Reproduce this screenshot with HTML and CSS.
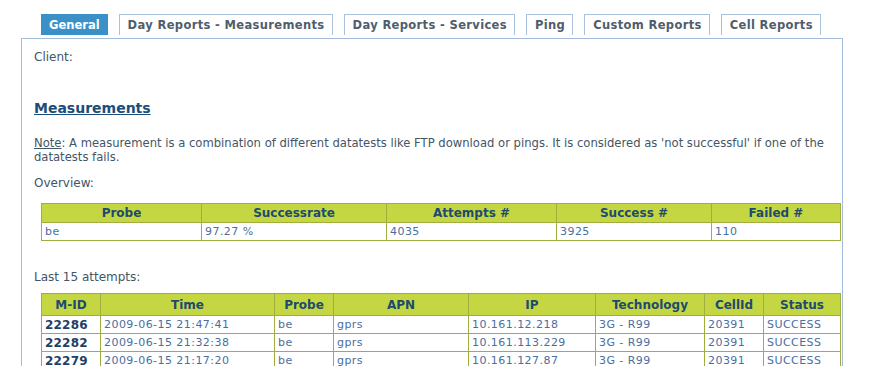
FILE: index.html
```html
<!DOCTYPE html>
<html lang="en">
<head>
    <meta charset="UTF-8">
    <title>Measurements</title>
    <link rel="stylesheet" href="styles.css">
</head>
<body>

<div class="page">
    <div class="tabs">
        <a class="tab active">General</a>
        <a class="tab">Day Reports - Measurements</a>
        <a class="tab">Day Reports - Services</a>
        <a class="tab">Ping</a>
        <a class="tab">Custom Reports</a>
        <a class="tab">Cell Reports</a>
    </div>

    <div class="panel">
        <p class="client">Client:</p>

        <h2 class="section-title">Measurements</h2>

        <p class="note"><u>Note</u>: A measurement is a combination of different datatests like FTP download or pings. It is considered as 'not successful' if one of the datatests fails.</p>

        <p class="label">Overview:</p>

        <table class="grid overview">
            <tr>
                <th>Probe</th>
                <th>Successrate</th>
                <th>Attempts #</th>
                <th>Success #</th>
                <th>Failed #</th>
            </tr>
            <tr>
                <td>be</td>
                <td>97.27 %</td>
                <td>4035</td>
                <td>3925</td>
                <td>110</td>
            </tr>
        </table>

        <p class="label last">Last 15 attempts:</p>

        <table class="grid attempts">
            <tr>
                <th>M-ID</th>
                <th>Time</th>
                <th>Probe</th>
                <th>APN</th>
                <th>IP</th>
                <th>Technology</th>
                <th>CellId</th>
                <th>Status</th>
            </tr>
            <tr>
                <td class="mid">22286</td>
                <td>2009-06-15 21:47:41</td>
                <td>be</td>
                <td>gprs</td>
                <td>10.161.12.218</td>
                <td>3G - R99</td>
                <td>20391</td>
                <td>SUCCESS</td>
            </tr>
            <tr>
                <td class="mid">22282</td>
                <td>2009-06-15 21:32:38</td>
                <td>be</td>
                <td>gprs</td>
                <td>10.161.113.229</td>
                <td>3G - R99</td>
                <td>20391</td>
                <td>SUCCESS</td>
            </tr>
            <tr>
                <td class="mid">22279</td>
                <td>2009-06-15 21:17:20</td>
                <td>be</td>
                <td>gprs</td>
                <td>10.161.127.87</td>
                <td>3G - R99</td>
                <td>20391</td>
                <td>SUCCESS</td>
            </tr>
        </table>
    </div>
</div>

</body>
</html>
```

FILE: styles.css
```css
body {
    font-family: "DejaVu Sans", Verdana, sans-serif;
    background-color: #fff;
    color: #445566;
    margin: 0;
    padding: 0;
}

.page {
    width: 822px;
    height: 352px;
    overflow: hidden;
    padding: 14px 0 0 21px;
}

/* tabs */
.tabs {
    display: flex;
    gap: 11px;
    padding-left: 20px;
}

.tab {
    display: block;
    padding: 0 7px 0 8px;
    height: 20px;
    line-height: 20px;
    font-size: 11.5px;
    font-weight: bold;
    letter-spacing: 0.35px;
    color: #4f5d6d;
    border: 1px solid #a9c1dd;
    border-bottom: none;
    background: #fff;
}

.tab.active {
    background-color: #3b90c8;
    border-color: #3b90c8;
    color: #fff;
    letter-spacing: 0;
    padding: 0 7px;
}

.panel {
    margin-top: 3px;
    border: 1px solid #a3bcdb;
    padding: 11px 0 0 12px;
    height: 400px;
}

.panel p {
    margin: 0;
    font-size: 12px;
    line-height: 14px;
}

.section-title {
    margin: 35px 0 0;
    font-size: 14px;
    line-height: 18px;
    color: #1d4c78;
    text-decoration: underline;
}

.panel .note {
    margin-top: 19px;
    font-size: 11.6px;
}

.panel .label {
    margin-top: 12px;
}

.panel .label.last {
    margin-top: 29px;
}

/* tables */
.grid {
    border-collapse: collapse;
    table-layout: fixed;
    width: 800px;
    margin-left: 7px;
    margin-top: 13px;
}

.grid th,
.grid td {
    border: 1px solid #9fae3e;
    overflow: hidden;
    white-space: nowrap;
}

.grid th {
    background-color: #c4d743;
    color: #1e4a70;
    font-size: 12px;
    height: 18px;
    padding: 0;
    text-align: center;
}

.grid td {
    background-color: #fff;
    color: #4b6e9e;
    font-size: 11px;
    letter-spacing: 0.45px;
    height: 17px;
    padding: 0 3px;
}

.attempts {
    margin-top: 9px;
}

.attempts th {
    height: 21px;
}

.grid td.mid {
    font-size: 12px;
    font-weight: bold;
    color: #1e3f66;
    letter-spacing: 0.2px;
}

.overview th:nth-child(1) { width: 159px; }
.overview th:nth-child(2) { width: 184px; }
.overview th:nth-child(3) { width: 169px; }
.overview th:nth-child(4) { width: 154px; }

.attempts th:nth-child(1) { width: 58px; }
.attempts th:nth-child(2) { width: 173px; }
.attempts th:nth-child(3) { width: 58px; }
.attempts th:nth-child(4) { width: 134px; }
.attempts th:nth-child(5) { width: 126px; }
.attempts th:nth-child(6) { width: 108px; }
.attempts th:nth-child(7) { width: 58px; }
```
